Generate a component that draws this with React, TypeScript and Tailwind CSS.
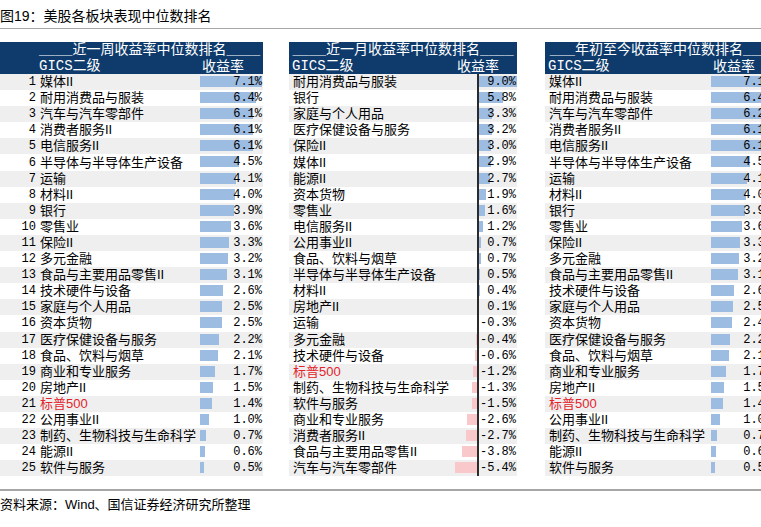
type Row = { name: string; value: number; red?: boolean };

const weekRows: Row[] = [
  { name: "媒体II", value: 7.1 },
  { name: "耐用消费品与服装", value: 6.4 },
  { name: "汽车与汽车零部件", value: 6.1 },
  { name: "消费者服务II", value: 6.1 },
  { name: "电信服务II", value: 6.1 },
  { name: "半导体与半导体生产设备", value: 4.5 },
  { name: "运输", value: 4.1 },
  { name: "材料II", value: 4.0 },
  { name: "银行", value: 3.9 },
  { name: "零售业", value: 3.6 },
  { name: "保险II", value: 3.3 },
  { name: "多元金融", value: 3.2 },
  { name: "食品与主要用品零售II", value: 3.1 },
  { name: "技术硬件与设备", value: 2.6 },
  { name: "家庭与个人用品", value: 2.5 },
  { name: "资本货物", value: 2.5 },
  { name: "医疗保健设备与服务", value: 2.2 },
  { name: "食品、饮料与烟草", value: 2.1 },
  { name: "商业和专业服务", value: 1.7 },
  { name: "房地产II", value: 1.5 },
  { name: "标普500", value: 1.4, red: true },
  { name: "公用事业II", value: 1.0 },
  { name: "制药、生物科技与生命科学", value: 0.7 },
  { name: "能源II", value: 0.6 },
  { name: "软件与服务", value: 0.5 },
];

const monthRows: Row[] = [
  { name: "耐用消费品与服装", value: 9.0 },
  { name: "银行", value: 5.8 },
  { name: "家庭与个人用品", value: 3.3 },
  { name: "医疗保健设备与服务", value: 3.2 },
  { name: "保险II", value: 3.0 },
  { name: "媒体II", value: 2.9 },
  { name: "能源II", value: 2.7 },
  { name: "资本货物", value: 1.9 },
  { name: "零售业", value: 1.6 },
  { name: "电信服务II", value: 1.2 },
  { name: "公用事业II", value: 0.7 },
  { name: "食品、饮料与烟草", value: 0.7 },
  { name: "半导体与半导体生产设备", value: 0.5 },
  { name: "材料II", value: 0.4 },
  { name: "房地产II", value: 0.1 },
  { name: "运输", value: -0.3 },
  { name: "多元金融", value: -0.4 },
  { name: "技术硬件与设备", value: -0.6 },
  { name: "标普500", value: -1.2, red: true },
  { name: "制药、生物科技与生命科学", value: -1.3 },
  { name: "软件与服务", value: -1.5 },
  { name: "商业和专业服务", value: -2.6 },
  { name: "消费者服务II", value: -2.7 },
  { name: "食品与主要用品零售II", value: -3.8 },
  { name: "汽车与汽车零部件", value: -5.4 },
];

const ytdRows: Row[] = [
  { name: "媒体II", value: 7.1 },
  { name: "耐用消费品与服装", value: 6.4 },
  { name: "汽车与汽车零部件", value: 6.2 },
  { name: "消费者服务II", value: 6.1 },
  { name: "电信服务II", value: 6.1 },
  { name: "半导体与半导体生产设备", value: 4.5 },
  { name: "运输", value: 4.1 },
  { name: "材料II", value: 4.0 },
  { name: "银行", value: 3.9 },
  { name: "零售业", value: 3.6 },
  { name: "保险II", value: 3.3 },
  { name: "多元金融", value: 3.2 },
  { name: "食品与主要用品零售II", value: 3.1 },
  { name: "技术硬件与设备", value: 2.6 },
  { name: "家庭与个人用品", value: 2.5 },
  { name: "资本货物", value: 2.4 },
  { name: "医疗保健设备与服务", value: 2.2 },
  { name: "食品、饮料与烟草", value: 2.1 },
  { name: "商业和专业服务", value: 1.7 },
  { name: "房地产II", value: 1.5 },
  { name: "标普500", value: 1.4, red: true },
  { name: "公用事业II", value: 1.0 },
  { name: "制药、生物科技与生命科学", value: 0.7 },
  { name: "能源II", value: 0.6 },
  { name: "软件与服务", value: 0.5 },
];

const cjk = "font-['Liberation_Sans','Noto_Sans_CJK_SC',sans-serif]";
const mono = "font-['Liberation_Mono','Noto_Sans_CJK_SC',monospace]";

function RankTable({
  title,
  rows,
  ranked,
  axis,
  scale,
}: {
  title: string;
  rows: Row[];
  ranked?: boolean;
  axis?: number;
  scale: number;
}) {
  const nameW = ranked ? "w-[164px]" : "w-[166px]";
  return (
    <div className={ranked ? "w-[263px] shrink-0" : "w-[228px] shrink-0"}>
      {/* Header */}
      <div className="bg-[#0e3b6c] text-white h-[32px]">
        <div className="flex h-[16px] items-center">
          {ranked && <div className="w-[36px] shrink-0" />}
          <div className={`flex-1 text-center text-[14px] leading-[16px] whitespace-nowrap ${mono}`}>{title}</div>
        </div>
        <div className="flex h-[16px] items-center">
          {ranked && <div className="w-[36px] shrink-0" />}
          <div className={`${nameW} shrink-0 pl-[3px] text-[14px] leading-[16px] ${mono}`}>GICS二级</div>
          <div className={`pl-[2px] text-[14px] leading-[16px] ${cjk}`}>收益率</div>
        </div>
      </div>
      {/* Rows */}
      {rows.map((r, i) => {
        const w = Math.abs(r.value) * scale;
        const left = axis === undefined ? 0 : r.value >= 0 ? axis : axis - w;
        return (
          <div
            key={i}
            className={`flex h-[16.1px] items-center text-black ${i % 2 === 0 ? "bg-[#efefef]" : "bg-white"}`}
          >
            {ranked && (
              <div className={`w-[36px] shrink-0 text-right text-[12px] leading-[16px] ${mono}`}>{i + 1}</div>
            )}
            <div
              className={`${nameW} shrink-0 pl-[4px] whitespace-nowrap text-[13px] leading-[16px] ${cjk} ${
                r.red ? "text-[#e3232b]" : ""
              }`}
            >
              {r.name}
            </div>
            <div className="relative flex-1 h-full">
              <div
                className={`absolute top-[2px] h-[11px] ${r.value >= 0 ? "bg-[#9dbce2]" : "bg-[#f8c8cb]"}`}
                style={{ left, width: w }}
              />
              {axis !== undefined && (
                <div className="absolute top-0 h-full w-[2px] bg-[#2b2b2b]" style={{ left: axis - 1 }} />
              )}
              <div className={`relative text-right pr-[1px] text-[12px] leading-[16px] ${mono}`}>
                {r.value.toFixed(1)}%
              </div>
            </div>
          </div>
        );
      })}
    </div>
  );
}

export default function App() {
  return (
    <div className={`w-[761px] h-[527px] overflow-hidden bg-white text-black ${cjk}`}>
      <div className="h-[29px] border-b border-[#a6a6a6] pt-[6px] text-[14px] leading-[20px] whitespace-nowrap">
        图19：美股各板块表现中位数排名
      </div>

      <div className="mt-[13px] flex gap-[26px]">
        <RankTable title="____近一周收益率中位数排名____" rows={weekRows} ranked scale={8.73} />
        <RankTable title="____近一月收益率中位数排名____" rows={monthRows} axis={23} scale={4.33} />
        <div className="ml-[2px]">
          <RankTable title="___年初至今收益率中位数排名___" rows={ytdRows} scale={8.73} />
        </div>
      </div>

      <div className="mt-[13px] border-t-2 border-[#a6a6a6] pt-[1px] text-[13px] leading-[26px] whitespace-nowrap">
        资料来源：Wind、国信证券经济研究所整理
      </div>
    </div>
  );
}
